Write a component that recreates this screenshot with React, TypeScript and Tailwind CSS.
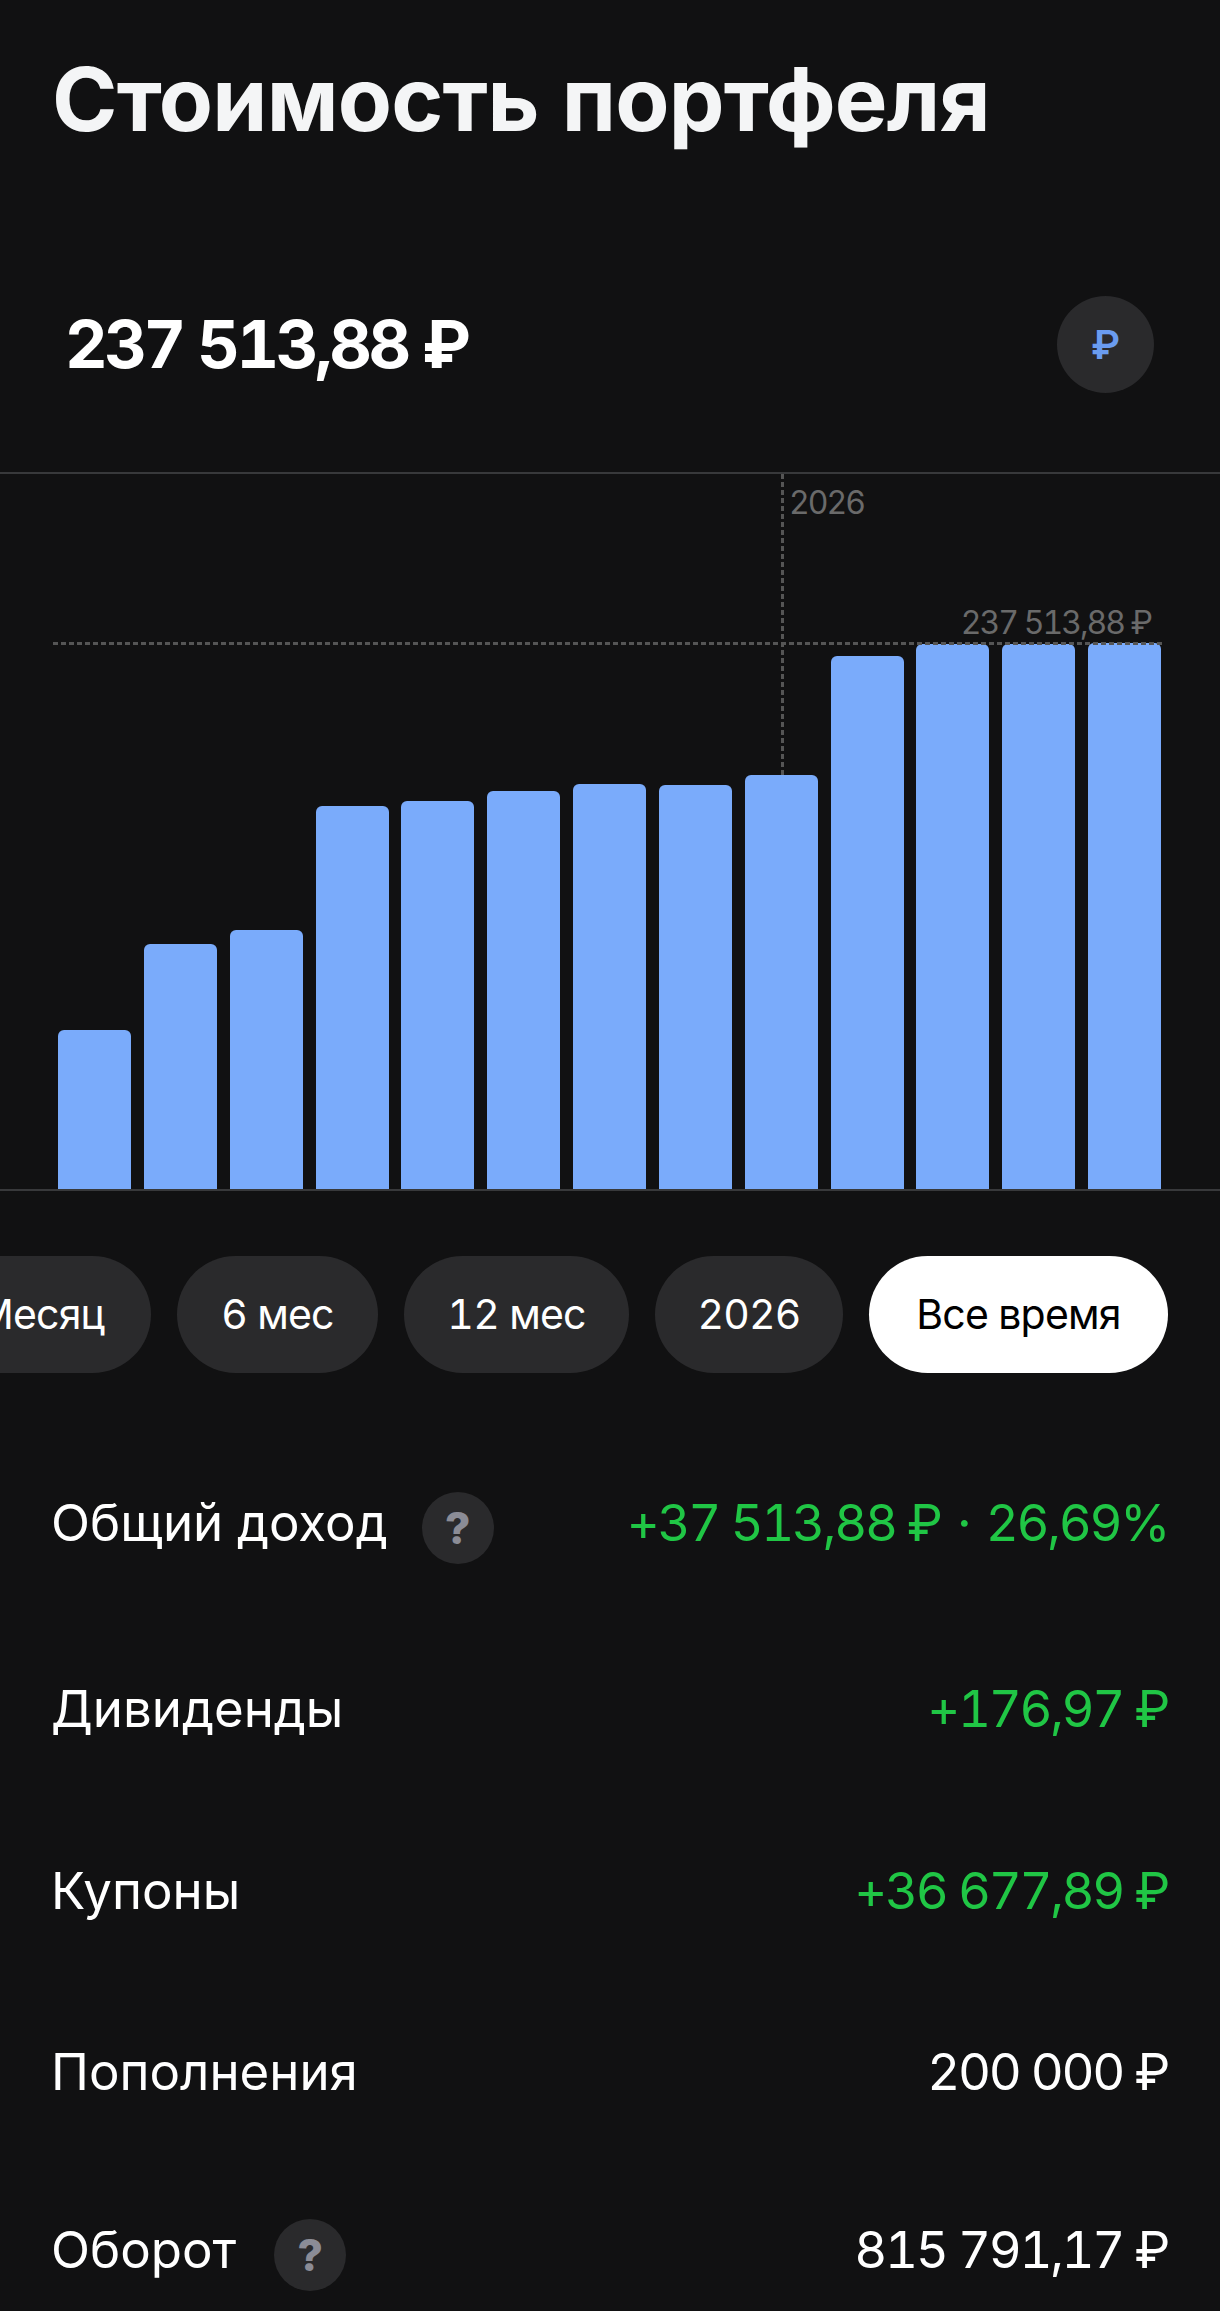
import type { ReactNode } from "react";

const bars = [159, 245, 259, 383, 388, 398, 405, 404, 414, 533, 545, 545, 546];

const pills = [
  { label: "Месяц", width: "w-[221px]" },
  { label: "6 мес", width: "w-[201px]" },
  { label: "12 мес", width: "w-[225px]" },
  { label: "2026", width: "w-[188px]" },
];

const Help = () => (
  <span className="mt-[9px] flex h-[72px] w-[72px] shrink-0 items-center justify-center rounded-full bg-[#2a2a2c] text-[44px] font-extrabold text-[#8b8c96]">
    ?
  </span>
);

const Row = ({
  label,
  value,
  help,
  green,
  h,
  gap = "gap-[34px]",
}: {
  label: string;
  value: ReactNode;
  help?: boolean;
  green?: boolean;
  h: string;
  gap?: string;
}) => (
  <div className={`flex items-center justify-between ${h}`}>
    <div className={`flex items-center text-[51px] ${gap}`}>
      <span>{label}</span>
      {help && <Help />}
    </div>
    <span className={`text-[51px] tracking-[-2.3px] ${green ? "text-[#20c645]" : "text-white"}`}>{value}</span>
  </div>
);

export default function App() {
  return (
    <div className="h-[2311px] w-[1220px] overflow-hidden bg-[#111112] font-['Inter',sans-serif] tabular-nums text-white">
      {/* Header */}
      <h1 className="pl-[52px] pt-[44px] text-[88.5px] leading-[110px] font-bold tracking-[-0.8px] text-[#f4f5f6]">
        Стоимость портфеля
      </h1>

      {/* Total */}
      <div className="mt-[142px] flex items-center justify-between pl-[65px] pr-[66px]">
        <span className="text-[66px] leading-[97px] font-bold tracking-[-3.4px]">237 513,88 ₽</span>
        <span className="flex h-[97px] w-[97px] items-center justify-center rounded-full bg-[#2a2a2c] text-[40px] font-semibold text-[#6a9cf0]">
          ₽
        </span>
      </div>

      {/* Chart */}
      <div className="relative mt-[79px] flex h-[719px] items-end gap-[12.85px] border-y-2 border-[#38393b] pl-[58px]">
        {bars.map((height, i) => (
          <div
            key={i}
            className="w-[73px] rounded-t-[6px] bg-[#7aabfb]"
            style={{ height }}
          />
        ))}
        <div className="absolute left-[781px] top-0 h-[302px] w-[3px] bg-[repeating-linear-gradient(180deg,#555_0_5px,transparent_5px_8px)]" />
        <div className="absolute left-[53px] top-[168px] h-[3px] w-[1112px] bg-[repeating-linear-gradient(90deg,#555_0_5px,transparent_5px_8px)]" />
        <span className="absolute left-[789px] top-[7px] text-[32px] leading-[44px] tracking-[-2px] text-[#6a6a6a]">2026</span>
        <span className="absolute right-[69px] top-[129px] text-[32px] leading-[40px] tracking-[-2px] text-[#6a6a6a]">237 513,88 ₽</span>
      </div>

      {/* Period switch */}
      <div className="mt-[65px] flex justify-end gap-[26px] overflow-hidden pr-[52px] text-center text-[41px] leading-[117px] tracking-[-0.8px]">
        {pills.map((p) => (
          <div key={p.label} className={`h-[117px] shrink-0 rounded-full bg-[#2a2a2c] ${p.width}`}>
            {p.label}
          </div>
        ))}
        <div className="h-[117px] w-[299px] shrink-0 rounded-full bg-white text-black">Все время</div>
      </div>

      {/* Stats */}
      <div className="mt-[90px] pl-[51px] pr-[52px]">
        <Row
          h="h-[120px]"
          label="Общий доход"
          value={
            <>
              +37 513,88 ₽ <span className="mx-[5px]">·</span> 26,69%
            </>
          }
          help
          green
        />
        <Row h="mt-[66px] h-[120px]" label="Дивиденды" value="+176,97 ₽" green />
        <Row h="mt-[62px] h-[120px]" label="Купоны" value="+36 677,89 ₽" green />
        <Row h="mt-[61px] h-[120px]" label="Пополнения" value="200 000 ₽" />
        <Row h="mt-[58px] h-[120px]" label="Оборот" value="815 791,17 ₽" help gap="gap-[38px]" />
      </div>
    </div>
  );
}
